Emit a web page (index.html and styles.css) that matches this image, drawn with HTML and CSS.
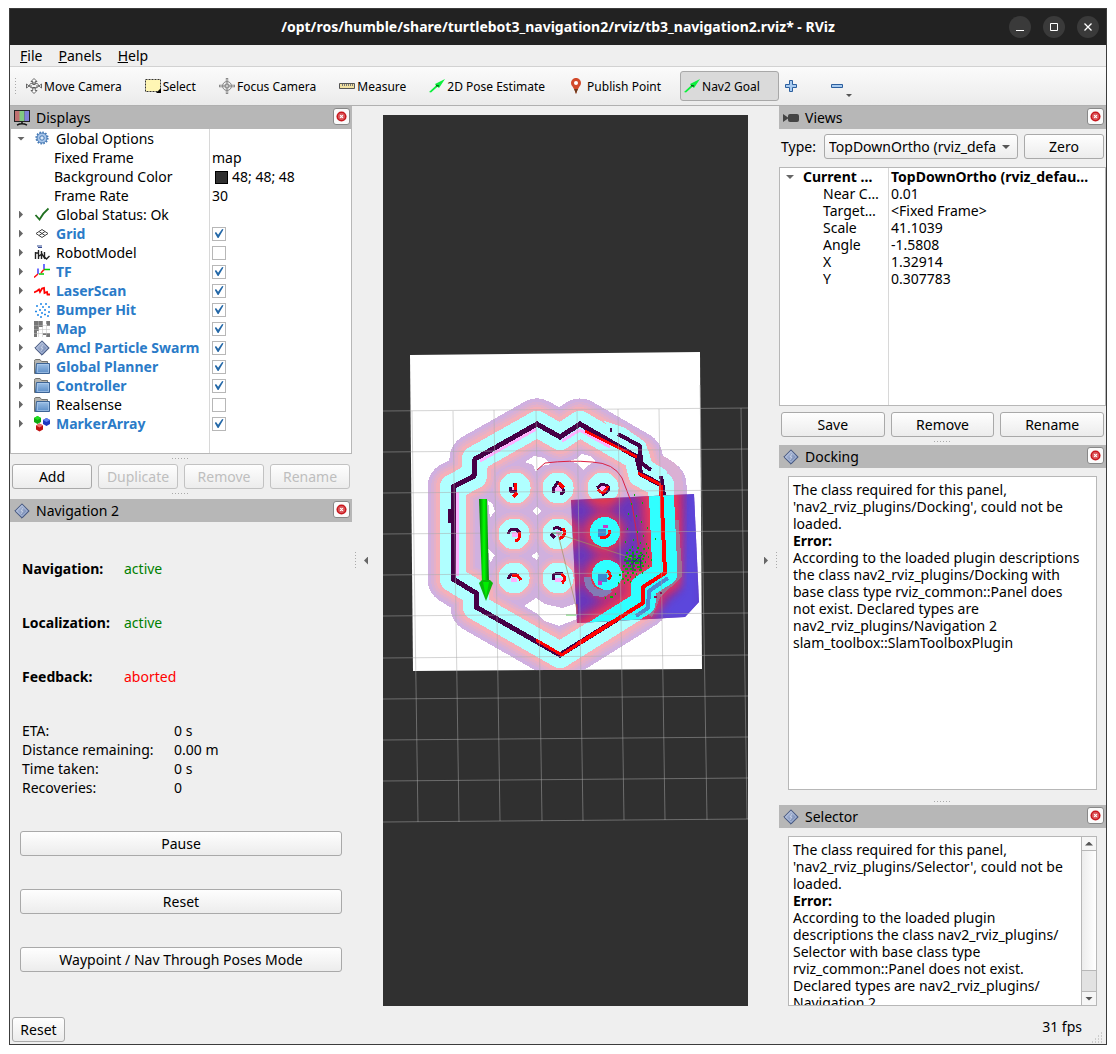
FILE: index.html
```html
<!DOCTYPE html>
<html lang="en">
<head>
<meta charset="utf-8">
<title>RViz</title>
<link rel="stylesheet" href="styles.css">
</head>
<body>
<svg class="defs" aria-hidden="true">
  <defs>
    <linearGradient id="g-diamond" x1="0" y1="0" x2="1" y2="1"><stop offset="0" stop-color="#c0cbe2"/><stop offset="1" stop-color="#6278a8"/></linearGradient>
    <linearGradient id="g-folder" x1="0" y1="0" x2="0" y2="1"><stop offset="0" stop-color="#9dc0e6"/><stop offset="1" stop-color="#5a8cc6"/></linearGradient>
    <symbol id="diamond" viewBox="0 0 16 16"><path d="M8 .8 15.200 8 8 15.200 .8 8Z" fill="url(#g-diamond)" stroke="#3f5078"/><path d="M8 3 13 8 8 13 3 8Z" fill="none" stroke="#b9c6e0" stroke-width=".5"/><path d="M9 5 7 8h2l-2 3" fill="none" stroke="#dfe6f4" stroke-width=".6"/></symbol>
    <symbol id="folder" viewBox="0 0 16 16"><path d="M.5 14.500V2.500Q.5 .5 1.500 .5H6L7.500 2.500H13.500V13.500Z" fill="#b4b4b0" stroke="#74746f"/><path d="M2.500 4.500H15.500V14.500H1.500Z" fill="url(#g-folder)" stroke="#3c6496"/><path d="M3.500 5.500h11v8h-11z" fill="none" stroke="#b5d0ee" stroke-width=".6"/></symbol>
    <symbol id="close" viewBox="0 0 12 12"><circle cx="6" cy="6" r="5.500" fill="#c8161c"/><circle cx="6" cy="6" r="3.800" fill="#dc5a5e"/><path d="M4.500 4.500 7.500 7.500M7.500 4.500 4.500 7.500" stroke="#fff" stroke-width="1.300"/></symbol>
    <symbol id="goal" viewBox="0 0 16 16"><path d="M0 14 7 7.500 6 6 16 1 10 10 8.500 8.800 2 14.500Z" fill="#0cf03c"/><path d="M7 7.500 10 8" stroke="#086818" stroke-width="1.500"/></symbol>
  </defs>
</svg>

<div class="window">
  <header class="titlebar">
    <h1>/opt/ros/humble/share/turtlebot3_navigation2/rviz/tb3_navigation2.rviz* - RViz</h1>
    <div class="window-buttons">
      <button aria-label="Minimize"><svg viewBox="0 0 22 22"><path d="M7 14.500h8" stroke="#fff"/></svg></button>
      <button aria-label="Maximize"><svg viewBox="0 0 22 22"><path d="M7.500 7.500h7v7h-7z" fill="none" stroke="#fff"/></svg></button>
      <button aria-label="Close"><svg viewBox="0 0 22 22"><path d="M7.500 7.500l7 7M14.500 7.500l-7 7" stroke="#fff" stroke-width="1.300"/></svg></button>
    </div>
  </header>

  <nav class="menubar">
    <a href="#"><u>F</u>ile</a><a href="#"><u>P</u>anels</a><a href="#"><u>H</u>elp</a>
  </nav>

  <div class="toolbar">
    <span class="grip"></span>
    <button><svg viewBox="0 0 16 16"><g fill="#fff" stroke="#555" stroke-width=".9"><path d="M8 .5 11 3.500H9.200V6.500H6.800V3.500H5ZM8 15.500 11 12.500H9.200V9.500H6.800V12.500H5ZM.5 6 3 8H6M.5 6v4L3 8M15.500 6 13 8h-3M15.500 6v4L13 8"/><ellipse cx="8" cy="7.500" rx="4.500" ry="2.500" fill="none"/></g></svg>Move Camera</button>
    <button><svg viewBox="0 0 16 16"><path d="M.5 1.500h15v12H.5z" fill="#fff6b4" stroke="#333" stroke-dasharray="2 1"/><path d="M16 10v5h-5Z" fill="#000"/></svg>Select</button>
    <button><svg viewBox="0 0 16 16"><g fill="none" stroke="#888"><path d="M8 0v16M0 8h16" stroke-width="2.400"/><path d="M8 1v14M1 8h14" stroke="#eee" stroke-width=".8"/><circle cx="8" cy="8" r="4.500"/><circle cx="8" cy="8" r="2"/></g></svg>Focus Camera</button>
    <button><svg viewBox="0 0 16 16"><path d="M.5 5.500h15v5H.5z" fill="#f0e0a0" stroke="#555"/><path d="M3.500 6v2M5.500 6v2M7.500 6v2M9.500 6v2M11.500 6v2M13.500 6v2" stroke="#777"/></svg>Measure</button>
    <button><svg viewBox="0 0 16 16"><use href="#goal"/></svg>2D Pose Estimate</button>
    <button><svg class="pin" viewBox="0 0 12 16"><path d="M6 16Q5 12 2.500 8.500A5 5 0 1 1 9.500 8.500Q7 12 6 16Z" fill="#d2492a"/><path d="M6 16Q5 13 4 11H8Q7 13 6 16Z" fill="#6b3a1c"/><circle cx="6" cy="5" r="2" fill="#fff"/></svg>Publish Point</button>
    <button class="active"><svg viewBox="0 0 16 16"><use href="#goal"/></svg>Nav2 Goal</button>
    <button class="add" aria-label="Add tool"><svg viewBox="0 0 16 16"><path d="M6.500 2.500h3v4h4v3h-4v4h-3v-4h-4v-3h4Z" fill="#a8cbf0" stroke="#2c5f9e"/></svg></button>
    <button class="drop" aria-label="Remove tool"><svg viewBox="0 0 16 16"><path d="M2.500 6.500h11v3h-11Z" fill="#a8cbf0" stroke="#2c5f9e"/></svg></button>
  </div>

  <main class="body">
    <section class="dock">
      <div class="dock-title">
        <svg viewBox="0 0 16 16"><path d="M0 0h16v12H0z" fill="#222"/><path d="M1 1h5v10H1z" fill="#c07070"/><path d="M5.500 1h5v10h-5z" fill="#80c880"/><path d="M10.500 1H15v10h-4.500z" fill="#8080d8"/><path d="M8 12v2M3 15.200Q8 12.500 13 15.200" stroke="#111" stroke-width="1.500" fill="none"/></svg>
        <h2>Displays</h2><button aria-label="Close Displays"><svg viewBox="0 0 12 12"><use href="#close"/></svg></button>
      </div>
      <div class="tree displays">
      <table>
        <colgroup><col class="name"><col></colgroup>
        <tr><td><div class="cell"><i class="open"></i><svg viewBox="0 0 16 16"><circle cx="8" cy="7" r="5" fill="#a8c6ea" stroke="#4478b4"/><circle cx="8" cy="7" r="5.800" fill="none" stroke="#4478b4" stroke-width="1.600" stroke-dasharray="1.500 1.500"/><circle cx="8" cy="7" r="2.200" fill="#dce9f7" stroke="#4478b4"/></svg>Global Options</div></td><td></td></tr>
        <tr><td class="leaf">Fixed Frame</td><td>map</td></tr>
        <tr><td class="leaf">Background Color</td><td><span class="swatch"></span>48; 48; 48</td></tr>
        <tr><td class="leaf">Frame Rate</td><td>30</td></tr>
        <tr><td><div class="cell"><i></i><svg viewBox="0 0 16 16"><path d="M1.500 8 5.500 12.500Q9 6 14.500 1.500" fill="none" stroke="#207020" stroke-width="1.800"/></svg>Global Status: Ok</div></td><td></td></tr>
        <tr><td><div class="cell on"><i></i><svg viewBox="0 0 16 16"><path d="M8 3.500 14 7.500 8 11.500 2 7.500ZM5 5.500 11 9.500M11 5.500 5 9.500" fill="none" stroke="#444"/></svg><label for="d1">Grid</label></div></td><td><input type="checkbox" id="d1" checked></td></tr>
        <tr><td><div class="cell"><i></i><svg viewBox="0 0 16 16"><path d="M3 1h5M4 2.500h4" stroke="#334a90" stroke-width="1.200"/><path d="M1.500 7v7M4.500 5v9M7.500 6v8M1 8h4M5 11l3-2 3 5M10.500 7v5l2 2 3-3" fill="none" stroke="#222" stroke-width="1.400"/></svg><label for="d2">RobotModel</label></div></td><td><input type="checkbox" id="d2"></td></tr>
        <tr><td><div class="cell on"><i></i><svg viewBox="0 0 16 16"><path d="M4 10V4.500M10 5V0" stroke="#22f" stroke-width="1.300"/><path d="M5 10h5M10 5.500h6" stroke="#0c0" stroke-width="1.300"/><path d="M4 10 0 13.500M10 5.500 7 9" stroke="#f11" stroke-width="1.500"/></svg><label for="d3">TF</label></div></td><td><input type="checkbox" id="d3" checked></td></tr>
        <tr><td><div class="cell on"><i></i><svg viewBox="0 0 16 16"><path d="M0 9.500 3 8 5 6.500 6 9 8 5.500 10 5 10.500 10 13 9 13.500 11.500H16" fill="none" stroke="#f00" stroke-width="1.800"/></svg><label for="d4">LaserScan</label></div></td><td><input type="checkbox" id="d4" checked></td></tr>
        <tr><td><div class="cell on"><i></i><svg viewBox="0 0 16 16"><path d="M6 2h2M11 2h2M2 4h2M8 5h2M14 5h2M5 8h2M10 8h2M1 9.500h2M7 11h2M14 10h2M3 13h2M10 12.500h2M13 14h2M6 15h2" stroke="#2088e8" stroke-width="1.700"/></svg><label for="d5">Bumper Hit</label></div></td><td><input type="checkbox" id="d5" checked></td></tr>
        <tr><td><div class="cell on"><i></i><svg viewBox="0 0 16 16"><path d="M0 0h9v6H5v4H3v6H0ZM12 0h4v5h-3V3h-1ZM9 12h7v4h-4v-2H9Z" fill="#777"/><path d="M0 4.500h16M0 8.500h16M0 12.500h16M4.500 0v16M8.500 0v16M12.500 0v16" stroke="#bbb" stroke-width=".5"/></svg><label for="d6">Map</label></div></td><td><input type="checkbox" id="d6" checked></td></tr>
        <tr><td><div class="cell on"><i></i><svg viewBox="0 0 16 16"><use href="#diamond"/></svg><label for="d7">Amcl Particle Swarm</label></div></td><td><input type="checkbox" id="d7" checked></td></tr>
        <tr><td><div class="cell on"><i></i><svg viewBox="0 0 16 16"><use href="#folder"/></svg><label for="d8">Global Planner</label></div></td><td><input type="checkbox" id="d8" checked></td></tr>
        <tr><td><div class="cell on"><i></i><svg viewBox="0 0 16 16"><use href="#folder"/></svg><label for="d9">Controller</label></div></td><td><input type="checkbox" id="d9" checked></td></tr>
        <tr><td><div class="cell"><i></i><svg viewBox="0 0 16 16"><use href="#folder"/></svg><label for="d10">Realsense</label></div></td><td><input type="checkbox" id="d10"></td></tr>
        <tr><td><div class="cell on"><i></i><svg viewBox="0 0 16 16"><path d="M3.500 0 7 2v4L3.500 8 0 6V2Z" fill="#10a810"/><path d="M3.500 0 7 2 3.500 4 0 2Z" fill="#20e020"/><path d="M12.500 2 16 4v4l-3.500 2L9 8V4Z" fill="#2038c0"/><path d="M12.500 2 16 4l-3.500 2L9 4Z" fill="#6080f0"/><path d="M5.500 7.500 9 9.500v4l-3.500 2L2 13.500v-4Z" fill="#c01010"/><path d="M5.500 7.500 9 9.500l-3.500 2L2 9.500Z" fill="#f07070"/></svg><label for="d11">MarkerArray</label></div></td><td><input type="checkbox" id="d11" checked></td></tr>
      </table>
      </div>
      <span class="splitter tall"></span>
      <div class="button-row">
        <button>Add</button><button disabled>Duplicate</button><button disabled>Remove</button><button disabled>Rename</button>
      </div>
      <span class="splitter tall"></span>

      <div class="dock-title">
        <svg viewBox="0 0 16 16"><use href="#diamond"/></svg>
        <h2>Navigation 2</h2><button aria-label="Close Navigation 2"><svg viewBox="0 0 12 12"><use href="#close"/></svg></button>
      </div>
      <div class="navigation">
        <dl class="status">
          <dt>Navigation:</dt><dd>active</dd>
          <dt>Localization:</dt><dd>active</dd>
          <dt>Feedback:</dt><dd class="bad">aborted</dd>
        </dl>
        <dl class="stats">
          <dt>ETA:</dt><dd>0 s</dd>
          <dt>Distance remaining:</dt><dd>0.00 m</dd>
          <dt>Time taken:</dt><dd>0 s</dd>
          <dt>Recoveries:</dt><dd>0</dd>
        </dl>
        <div class="actions">
          <button>Pause</button><button>Reset</button><button>Waypoint / Nav Through Poses Mode</button>
        </div>
      </div>
    </section>

    <div class="gutter left"><span></span><i></i></div>

    <svg class="viewport" viewBox="383 115 365 891" preserveAspectRatio="xMidYMid slice" role="img" aria-label="Map view">
      <defs>
        <path id="wall" d="M537 424 560 437 580 424 637 457 641 474 661 485 665 573 643 587 643 603 560 655 476 607 476 593 453 579 453 487 474 476 475 459Z"/>
        <path id="pillars" stroke-linecap="round" d="M515 488h.1M558 488h.1M603 488h.1M514 534h.1M558 534h.1M604 533h.1M514 578h.1M558 578h.1M605 577h.1"/>
        <clipPath id="sheet"><path d="M410 355 700 352 702 669 413 671Z"/></clipPath>
        <clipPath id="local"><path d="M571 500 694 494 699 602 685 617 577 623Z"/></clipPath>
        <filter id="soft"><feGaussianBlur stdDeviation="4"/></filter>
        <linearGradient id="g-arrow" x1="479" x2="489" y1="0" y2="0" gradientUnits="userSpaceOnUse"><stop offset="0" stop-color="#067806"/><stop offset=".5" stop-color="#0f0"/><stop offset="1" stop-color="#067806"/></linearGradient>
      </defs>
      <path d="M0 0h1200v1200H0z" fill="#303030"/>
      <path d="M410 355 700 352 702 669 413 671Z" fill="#fff"/>
      <g clip-path="url(#sheet)" shape-rendering="crispEdges" stroke-linejoin="round">
        <use href="#wall" fill="#d0b0de" stroke="#d0b0e0" stroke-width="51"/>
        <g fill="none"><use href="#wall" stroke="#dab0d4" stroke-width="44"/><use href="#wall" stroke="#e6b0c8" stroke-width="39"/><use href="#wall" stroke="#f4b0ba" stroke-width="34"/></g>
        <path d="M660 455q14 4 22 18v24h-24z" fill="#dab0d4"/>
        <g fill="none"><use href="#pillars" stroke="#dab0d4" stroke-width="44"/><use href="#pillars" stroke="#e6b0c8" stroke-width="39"/><use href="#pillars" stroke="#f4b0ba" stroke-width="35"/></g>
        <path d="M525 462 534 456 544 458 551 464 541 466 536 472 533 465ZM569 461 576 459 582 454 590 456 596 461 587 466 583 470 578 464ZM532 511 537 507 541 511 537 515ZM531 556 537 552 539 556 537 560ZM488 501 492 503 495 511 490 518ZM488 549 495 555 490 563ZM524 606 536 598 545 604 562 608 577 603 577 619 559 626 545 621 536 613Z" fill="#fff"/>
        <g fill="none"><use href="#wall" stroke="#b0ffff" stroke-width="26"/><use href="#pillars" stroke="#b0ffff" stroke-width="31"/></g>
        <path d="M604 421 625 428 645 442 652 462 666 470 673 490 656 490 630 462Z" fill="#b0ffff"/>
        <path d="M457 492V576M480 461 536 429M562 441 580 430 610 447" fill="none" stroke="#ffb0ff" stroke-width="3"/>
        <use href="#wall" fill="none" stroke="#460046" stroke-width="5" stroke-linejoin="miter"/>
        <path d="M618 434 640 446 641 463 651 470M661 476 664 495M450 509V523M610 430h2" fill="none" stroke="#460046" stroke-width="4"/>
        <path d="M510 488h7v4h-5zM555 486h7v5h-7zM600 486h7v4h-7zM512 532h6v5h-6zM556 531h5v5h-5zM511 578h6v4h-6zM555 578h7v4h-7z" fill="#ffb0ff"/>
        <g fill="none" stroke="#460046" stroke-width="3"><path d="M510 487v4h6l-2-8M553 493v-4l5-7 5 7v4h-3M597 488l5-4 6 2v5l-6 4M508 534l2-4 6-1 4 4M551 534l4 4M553 529l4-2 5 3M508 579l3-5 6 1 3 4M553 580v-5l4-2h6M598 578l5-5"/></g>
      </g>
      <g clip-path="url(#local)">
        <path d="M560 480h150v160H560z" fill="#6838bd"/>
        <g fill="none" filter="url(#soft)"><use href="#wall" stroke="#b02c7c" stroke-width="48"/><use href="#wall" stroke="#f03a50" stroke-width="32"/><use href="#pillars" stroke="#a92e84" stroke-width="46"/><use href="#pillars" stroke="#e03a4c" stroke-width="36"/></g>
        <path d="M688 490 700 490V620H650L682 590Z" fill="#5c46dc" filter="url(#soft)"/>
        <g fill="none" stroke-linejoin="round" shape-rendering="crispEdges"><path d="M604 421M676 520 680 575 658 596 650 616" stroke="#a07090" stroke-width="5"/><path d="M588 577a14 14 0 0 0 16 16l6-4M597 590l-5 3" stroke="#827bb5" stroke-width="7"/><use href="#wall" stroke="#30ffff" stroke-width="25"/><g fill="#30ffff" stroke="none"><circle cx="605" cy="532" r="15"/><circle cx="607" cy="575" r="15"/></g><path d="M668 578 649 591 648 608 636 616" stroke="#5088d0" stroke-width="4"/></g>
        <path d="M598 529h8v8h-8zM598 574h9v8h-9z" fill="#3c88d0"/><path d="M603 525h5v3h-5zM598 581h4v4h-4z" fill="#c838c8"/>
      </g>
      <g fill="none" stroke="#f00" stroke-width="3" shape-rendering="crispEdges">
        <path d="M585 431 637 457M638 473 661 485" stroke-width="3"/><path d="M661 485 665 573 643 587 643 603 578 644" stroke-width="4"/><path d="M578 644 562 655M536 640 562 655" stroke-width="3"/>
        <path d="M515 483v7M513 497l4-4M559 483l5 5M598 490q6 6 10-4M519 532q2 8-4 9M563 528q4 8-4 11M609 530q2 9-9 7M512 575h5l4 5M561 574q7 4 1 9M607 571q6 4 1 9"/>
      </g>
      <path d="M537 470 545 463Q570 460 592 462 614 463 622 478L632 504 637 535 639 550" fill="none" stroke="#dc2040"/>
      <path d="M558 534 635 559M558 534 577 610" stroke="#a09060" stroke-width=".7"/>
      <path d="M566 615h10" stroke="#5c5"/><path d="M577 604v10" stroke="#c03040"/><path d="M552 533h10" stroke="#3a8a40"/>
      <g fill="none" stroke="#aaa" stroke-opacity=".5">
        <path d="M383 411 748 408M383 452 748 449M383 493 748 490M383 534 748 531M383 575 748 572M383 616 748 613M383 658 748 655M383 699 748 696M383 740 748 737M383 781 748 778M383 822 748 819"/>
        <path d="M412 411 418 822M453 411 459 822M494 410 500 821M536 410 542 821M577 410 583 821M618 409 624 820M659 409 665 820M700 385 707 820M741 408 747 819"/>
      </g>
      <path d="M479 499h8l2 84h-7Z" fill="url(#g-arrow)"/><path d="M479 583 482 580h8l3 3-7 18Z" fill="#0ab80a"/><path d="M483 582h6l-3 16Z" fill="#0e0"/>
      <path d="M624 561h18M633 551v20M640 557l1 12M629 566l14-12" stroke="#203070"/>
      <path d="M634 495h1M631 504h1M642 503h1M628 514h1M636 516h1M641 522h1M627 529h1M637 532h1M643 536h1M633 540h1M647 528h1M625 542h1M640 543h1M646 544h1M655 539h1M632 547h1M637 548h2M643 549h2M629 550h2M626 553h2M632 553h2M636 552h2M640 553h2M646 553h1M625 557h2M629 556h3M634 556h2M638 556h3M643 556h2M648 557h1M624 560h2M628 559h3M633 559h3M638 560h2M642 559h2M626 563h3M631 562h2M635 563h4M641 563h2M645 562h1M623 566h2M628 566h3M633 566h2M637 567h3M642 566h2M625 569h3M630 569h2M634 570h2M639 570h3M622 572h2M627 573h2M632 573h2M636 574h1M642 573h1M619 575h2M625 576h2M630 577h1M635 577h1M622 579h2M627 580h2M618 583h1M624 583h1M630 582h1M605 598h1M610 597h3M615 594h1M648 548h1M651 560h1M648 566h1" stroke="#00b400" stroke-width="2"/>
      <path d="M654 597h3M660 593h2" stroke="#901050" stroke-width="2"/>
    </svg>

    <div class="gutter right"><i></i><span></span></div>

    <section class="dock">
      <div class="dock-title">
        <svg viewBox="0 0 16 16"><path d="M0 4l5 3.500v1L0 12Z" fill="#444"/><rect x="5" y="4" width="11" height="8" rx="2" fill="#444"/></svg>
        <h2>Views</h2><button aria-label="Close Views"><svg viewBox="0 0 12 12"><use href="#close"/></svg></button>
      </div>
      <div class="type-row">
        <label for="type">Type:</label>
        <div class="combo"><select id="type"><option>TopDownOrtho (rviz_default_plugins)</option></select></div>
        <button>Zero</button>
      </div>
      <div class="tree views">
      <table>
        <colgroup><col class="name"><col></colgroup>
        <tr><th><i class="open"></i>Current …</th><th>TopDownOrtho (rviz_defau…</th></tr>
        <tr><td>Near C…</td><td>0.01</td></tr>
        <tr><td>Target…</td><td>&lt;Fixed Frame&gt;</td></tr>
        <tr><td>Scale</td><td>41.1039</td></tr>
        <tr><td>Angle</td><td>-1.5808</td></tr>
        <tr><td>X</td><td>1.32914</td></tr>
        <tr><td>Y</td><td>0.307783</td></tr>
      </table>
      </div>
      <div class="button-row views-buttons"><button>Save</button><button>Remove</button><button>Rename</button></div>
      <span class="splitter"></span>

      <div class="dock-title">
        <svg viewBox="0 0 16 16"><use href="#diamond"/></svg>
        <h2>Docking</h2><button aria-label="Close Docking"><svg viewBox="0 0 12 12"><use href="#close"/></svg></button>
      </div>
      <div class="message docking">
        <p>The class required for this panel,<br>'nav2_rviz_plugins/Docking', could not be<br>loaded.<br><b>Error:</b><br>According to the loaded plugin descriptions<br>the class nav2_rviz_plugins/Docking with<br>base class type rviz_common::Panel does<br>not exist. Declared types are<br>nav2_rviz_plugins/Navigation 2<br>slam_toolbox::SlamToolboxPlugin</p>
      </div>
      <span class="splitter"></span>

      <div class="dock-title">
        <svg viewBox="0 0 16 16"><use href="#diamond"/></svg>
        <h2>Selector</h2><button aria-label="Close Selector"><svg viewBox="0 0 12 12"><use href="#close"/></svg></button>
      </div>
      <div class="message selector">
        <p>The class required for this panel,<br>'nav2_rviz_plugins/Selector', could not be<br>loaded.<br><b>Error:</b><br>According to the loaded plugin<br>descriptions the class nav2_rviz_plugins/<br>Selector with base class type<br>rviz_common::Panel does not exist.<br>Declared types are nav2_rviz_plugins/<br>Navigation 2</p>
        <div class="scrollbar"><button class="up" aria-label="Scroll up"></button><span class="thumb"></span><span class="track"></span><button class="down" aria-label="Scroll down"></button></div>
      </div>
    </section>
  </main>

  <footer class="statusbar">
    <button>Reset</button><span>31 fps</span>
    <svg viewBox="0 0 12 12"><path d="M9 1h1M6 4h1M9 4h1M3 7h1M6 7h1M9 7h1M0 10h1M3 10h1M6 10h1M9 10h1" stroke="#aaa"/></svg>
  </footer>
</div>
</body>
</html>
```
FILE: styles.css
```css
* { box-sizing: border-box; }
body { margin: 0; background: #fff; color: #000; font: 14px/17px "Noto Sans", sans-serif; }
h1, h2, p, dl, dd { margin: 0; }
button, select, input { font: inherit; color: inherit; margin: 0; padding: 0; }
.defs { position: absolute; width: 0; height: 0; }
svg { display: block; }

.window {
  display: flex; flex-direction: column;
  min-height: calc(100vh - 17px);
  margin: 8px 9px 9px;
  border: 1px solid #3c3c3c;
  background: #efefef;
}
.titlebar { display: flex; align-items: center; height: 36px; background: #222; color: #fff; padding-right: 7px; }
.titlebar h1 { flex: 1; padding-left: 97px; text-align: center; font-size: 14px; line-height: 20px; white-space: nowrap; }
.window-buttons { display: flex; gap: 12px; }
.window-buttons button { width: 22px; height: 22px; border: 0; border-radius: 50%; background: #3a3a3a; }

.menubar { display: flex; gap: 16px; height: 22px; padding: 2px 10px 0; border-bottom: 1px solid #d2d2d2; }
.menubar a { color: inherit; text-decoration: none; }

.toolbar { display: flex; align-items: center; height: 39px; padding-left: 4px; background: linear-gradient(#fbfbfb, #ebebeb); border-bottom: 1px solid #b0b0b0; font-size: 12px; }
.grip { width: 4px; height: 18px; margin-right: 4px; background: radial-gradient(circle, #aaa 30%, transparent 40%) 0 0 / 3px 3px; }
.toolbar button { display: flex; align-items: center; gap: 2px; height: 30px; padding: 0 18px 0 3px; border: 1px solid transparent; border-radius: 3px; background: none; white-space: nowrap; }
.toolbar svg { width: 16px; height: 16px; }
.toolbar .pin { width: 12px; margin: 0 3px 0 2px; }
.toolbar .active { border-color: #a8a8a8; background: #dadada; }
.toolbar .add { padding: 0 28px 0 3px; }
.toolbar .drop { position: relative; padding: 0 8px 0 0; }
.toolbar .drop::after { content: ""; position: absolute; right: 1px; bottom: 3px; border: 3px solid transparent; border-top-color: #555; border-bottom: 0; }

.body { flex: 1; display: grid; grid-template-columns: 342px 31px minmax(0, 1fr) 31px 327px; }
.dock { display: flex; flex-direction: column; min-width: 0; }
.dock-title { display: flex; align-items: center; gap: 6px; height: 23px; flex: none; padding: 0 2px 0 4px; background: #b7b7b7; }
.dock-title > svg { width: 16px; height: 16px; }
.dock-title h2 { flex: 1; font-size: 14px; font-weight: 400; }
.dock-title button { display: grid; place-items: center; align-self: flex-start; width: 17px; height: 17px; margin-top: 2px; border: 1px solid #888; border-radius: 3px; background: #fbfbfb; }
.dock-title button svg { width: 11px; height: 11px; }

.tree { border: 1px solid #b7b7b7; background: #fff; }
.tree table { width: 100%; border-collapse: collapse; table-layout: fixed; }
.tree td, .tree th { padding: 0 0 0 3px; text-align: left; white-space: nowrap; }
.tree i, .gutter i { display: block; width: 4px; height: 8px; background: #666; clip-path: polygon(0 0, 100% 50%, 0 100%); }
.tree i.open { width: 8px; height: 4px; clip-path: polygon(0 0, 100% 0, 50% 100%); }
.displays { height: 325px; border-top: 0; background: linear-gradient(#d8d8d8, #d8d8d8) 198px 0 / 1px 100% no-repeat #fff; }
.displays .name { width: 199px; }
.displays tr { height: 19px; }
.displays td + td { padding-left: 2px; }
.displays td.leaf { padding-left: 43px; }
.cell { display: flex; align-items: center; height: 19px; padding-left: 5px; }
.cell i { margin-right: 11px; }
.cell i.open { margin: 0 9px 0 -2px; }
.cell svg { width: 16px; height: 16px; margin-right: 6px; }
.on { color: #2a7bc8; font-weight: 700; }
.swatch { display: inline-block; width: 13px; height: 13px; margin: 0 4px 0 3px; border: 1px solid #000; background: #303030; vertical-align: -2px; }
input[type="checkbox"] { appearance: none; display: grid; place-items: center; width: 14px; height: 14px; border: 1px solid #b7b7b7; background: #fff; }
input[type="checkbox"]:checked::before { content: ""; width: 9px; height: 9px; background: #2468a8; clip-path: polygon(0 40%, 20% 35%, 40% 65%, 85% 0, 100% 5%, 45% 100%, 35% 100%); }

.splitter { flex: none; height: 8px; padding-top: 4px; }
.splitter::before { content: ""; display: block; width: 18px; height: 1px; margin: 0 auto; background: repeating-linear-gradient(90deg, #aaa 0 1px, transparent 1px 3px); }
.splitter.tall { height: 10px; }

.button-row { display: flex; gap: 6px; padding: 0 2px; }
.button-row button, .actions button, .type-row button, .statusbar button, .combo {
  flex: 1; min-width: 0; height: 25px; border: 1px solid #a9a9a9; border-radius: 3px;
  background: linear-gradient(#fefefe, #ececec);
}
.button-row button:disabled { border-color: #c2c2c2; color: #bebebe; }

.navigation { flex: 1; padding: 19px 10px 33px; }
.status { display: grid; grid-template-columns: 102px 1fr; grid-auto-rows: 54px; align-items: center; padding-left: 2px; }
.status dt { font-weight: 700; }
.status dd { color: #008000; }
.status .bad { color: #f00; }
.stats { display: grid; grid-template-columns: 152px 1fr; grid-auto-rows: 19px; align-items: center; padding: 18px 0 34px 2px; }
.actions { display: grid; grid-auto-rows: 25px; gap: 33px; }

.gutter { display: flex; align-items: center; justify-content: center; gap: 8px; padding-top: 9px; }
.gutter span { width: 1px; height: 17px; background: repeating-linear-gradient(#aaa 0 1px, transparent 1px 3px); }
.gutter.left { justify-content: flex-start; padding-left: 3px; }
.gutter.left i { clip-path: polygon(100% 0, 0 50%, 100% 100%); }
.gutter.right { justify-content: flex-end; padding-right: 2px; }

.viewport { width: 100%; height: calc(100% - 9px); margin-top: 9px; background: #303030; }

.type-row { display: grid; grid-template-columns: 37px 194px 1fr; gap: 6px; align-items: center; padding: 5px 2px 8px; }
.type-row label { white-space: nowrap; }
.combo { position: relative; display: flex; padding: 0 21px 0 4px; }
.combo select { appearance: none; width: 100%; border: 0; background: none; outline: 0; }
.combo::after { content: ""; position: absolute; right: 7px; top: 10px; border: 4px solid transparent; border-top-color: #555; border-bottom: 0; }

.views { height: 239px; background: linear-gradient(#d8d8d8, #d8d8d8) 108px 0 / 1px 100% no-repeat #fff; }
.views .name { width: 108px; }
.views tr { height: 17px; }
.views tr > :first-child { padding-left: 43px; }
.views tr th:first-child { padding-left: 23px; }
.views th:first-child i.open { float: left; margin: 7px 0 0 -17px; }
.views-buttons { padding-top: 6px; }

.message { display: flex; margin: 8px 9px 0; border: 1px solid #b7b7b7; background: #fff; overflow: hidden; }
.message p { flex: 1; min-width: 0; padding: 4px 0 0 4px; white-space: nowrap; }
.docking { flex: 1; margin-bottom: 7px; }
.selector { height: 170px; }
.scrollbar { display: flex; flex-direction: column; width: 15px; border-left: 1px solid #b7b7b7; background: #e2e2e2; }
.scrollbar button { display: grid; place-items: center; height: 14px; border: 0; background: #f6f6f6; }
.scrollbar .up { border-bottom: 1px solid #b7b7b7; }
.scrollbar .down { border-top: 1px solid #b7b7b7; }
.scrollbar button::before { content: ""; width: 8px; height: 4px; background: #555; clip-path: polygon(0 100%, 50% 0, 100% 100%); }
.scrollbar .down::before { clip-path: polygon(0 0, 100% 0, 50% 100%); }
.thumb { flex: 6; border-bottom: 1px solid #b7b7b7; background: linear-gradient(90deg, #ececec, #fff); }
.track { flex: 1; }

.statusbar { display: flex; align-items: center; height: 38px; padding: 9px 2px 0; }
.statusbar button { flex: none; width: 53px; }
.statusbar span { margin-left: auto; padding: 0 10px 6px 0; }
.statusbar svg { width: 12px; height: 12px; align-self: flex-end; }
```
